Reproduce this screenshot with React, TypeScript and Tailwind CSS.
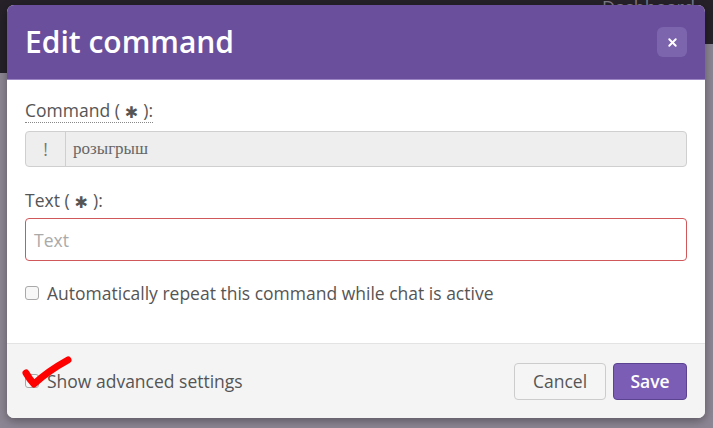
import { X } from 'lucide-react';

const Star = () => (
  <span className="mx-[5px] inline-block align-[-1px] text-[16px] leading-none text-[#555] [font-family:'DejaVu_Sans',sans-serif]">✱</span>
);

const Box = () => (
  <span className="inline-block h-[14px] w-[14px] shrink-0 rounded-[3px] border border-[#a9a9a9] bg-[#f7f7f7]" />
);

export default function App() {
  return (
    <div className="relative h-[428px] w-[713px] overflow-hidden bg-[#8c8694] [font-family:'Open_Sans',sans-serif]">
      {/* page behind the dim overlay */}
      <div className="flex h-[44px] items-start justify-end bg-[#262129] pr-[18px]">
        <span className="-mt-[4px] text-[18px] leading-[22px] text-[#7f7a86]">Dashboard</span>
      </div>
      <div className="flex">
        <div className="h-[29px] w-[7px] bg-[#262129]" />
      </div>

      {/* modal */}
      <div className="absolute left-[7px] top-[5px] flex w-[698px] flex-col overflow-hidden rounded-[7px] bg-white shadow-[0_3px_10px_rgba(0,0,0,0.35)]">
        <div className="flex h-[75px] items-center justify-between border-b border-[#9c87c4] bg-[#6a4f9c] pl-[18px] pr-[18px]">
          <h1 className="text-[30px] font-semibold leading-none text-white">Edit command</h1>
          <button className="flex h-[30px] w-[30px] items-center justify-center rounded-[6px] bg-[#7d65ae] text-white">
            <X size={13} strokeWidth={3.5} />
          </button>
        </div>

        <div className="flex flex-col px-[18px] pb-[38px] pt-[19px] text-[17.5px] leading-[24px] text-[#555]">
          <label className="self-start border-b border-dotted border-[#888] leading-[23px]">
            Command (<Star />):
          </label>
          <div className="mt-[8px] flex h-[36px] rounded-[4px] border border-[#cfcfcf] bg-[#eeeeee]">
            <span className="flex w-[40px] items-center justify-center border-r border-[#cfcfcf] text-[#777]">!</span>
            <span className="flex items-center pl-[7px] text-[17px] text-[#666] [font-family:'Liberation_Serif',serif]">розыгрыш</span>
          </div>

          <label className="mt-[21px]">
            Text (<Star />):
          </label>
          <div className="mt-[6px] flex h-[43px] items-center rounded-[4px] border border-[#d0575a] px-[8px] text-[#aaa]">
            Text
          </div>

          <label className="mt-[20px] flex items-center gap-[8px]">
            <Box />
            Automatically repeat this command while chat is active
          </label>
        </div>

        <div className="relative flex h-[75px] items-center justify-between border-t border-[#e3e3e3] bg-[#f4f4f4] pl-[18px] pr-[18px] text-[17.5px] text-[#555]">
          <label className="flex items-center gap-[8px]">
            <Box />
            Show advanced settings
          </label>
          <svg className="absolute left-[14px] top-[11px]" width="56" height="40" viewBox="0 0 56 40">
            <path d="M5 18 Q 9 25 13 29 Q 27 16 47 5" fill="none" stroke="#ff0000" strokeWidth="7" strokeLinecap="round" strokeLinejoin="round" />
          </svg>
          <div className="flex gap-[7px]">
            <button className="h-[37px] w-[92px] rounded-[4px] border border-[#cccccc] bg-[#f5f5f5] text-[#555]">Cancel</button>
            <button className="h-[37px] w-[74px] rounded-[4px] border border-[#5b4391] bg-[#7b5db6] font-semibold text-white">Save</button>
          </div>
        </div>
      </div>
    </div>
  );
}
